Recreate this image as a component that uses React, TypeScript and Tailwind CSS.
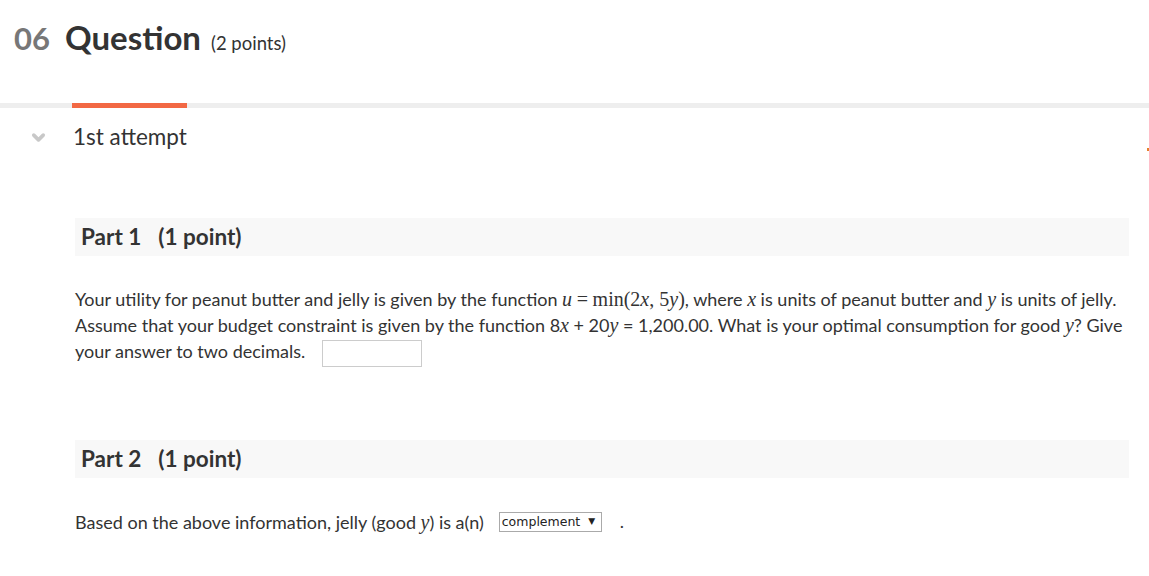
import { ChevronDown } from 'lucide-react';

const math = "font-['Liberation_Serif','DejaVu_Serif',serif] text-[20px]";

function V({ c }: { c: string }) {
  return <i className={math}>{c}</i>;
}

function PartHeader({ n }: { n: number }) {
  return (
    <div className="h-[38px] bg-[#f8f8f8] flex items-center pl-[6px] text-[22.5px] font-bold text-[#333]">
      <span>Part {n}</span>
      <span className="ml-[17px]">(1 point)</span>
    </div>
  );
}

export default function App() {
  return (
    <div className="w-[1149px] h-[576px] bg-white text-[#333] font-['Lato','Open_Sans',sans-serif] overflow-hidden relative">
      <div className="flex items-baseline pt-[13px] pl-[14px] h-[103px]">
        <span className="text-[31px] font-bold text-[#777]">06</span>
        <span className="ml-[15px] text-[33px] font-bold text-[#333]">Question</span>
        <span className="ml-[10px] text-[18.5px] text-[#333]">(2 points)</span>
      </div>
      <div className="h-[5px] bg-[#eeeeee] flex">
        <div className="ml-[72px] w-[115px] h-[5px] bg-[#f26844]" />
      </div>
      <div className="flex items-center h-[58px]">
        <ChevronDown className="ml-[29px] w-[19px] h-[19px] text-[#c8c8c8]" strokeWidth={4.5} />
        <span className="ml-[25px] text-[22.5px] text-[#333]">1st attempt</span>
      </div>

      <div className="ml-[75px] mr-[20px] mt-[52px]">
        <PartHeader n={1} />
        <p className="mt-[30px] text-[18px] leading-[26px] text-[#333] whitespace-nowrap">
          Your utility for peanut butter and jelly is given by the function{' '}
          <V c="u" /> <span className={math}>=</span>{' '}
          <span className={math}>
            min(2<i>x</i>, 5<i>y</i>)
          </span>
          , where <V c="x" /> is units of peanut butter and <V c="y" /> is units of jelly.
          <br />
          Assume that your budget constraint is given by the function 8<V c="x" /> + 20<V c="y" /> = 1,200.00.
          What is your optimal consumption for good <V c="y" />? Give
          <br />
          your answer to two decimals.
          <input
            className="ml-[17px] align-middle w-[100px] h-[27px] border border-[#cccccc] outline-none"
            aria-label="answer"
          />
        </p>

        <div className="mt-[73px]">
          <PartHeader n={2} />
        </div>
        <div className="mt-[29px] flex items-center text-[18px] text-[#333]">
          <span>
            Based on the above information, jelly (good <V c="y" />) is a(n)
          </span>
          <div className="ml-[15px] w-[103px] h-[20px] border border-[#aaaaaa] flex items-center pl-[2px] text-[12.5px] font-['DejaVu_Sans',Verdana,sans-serif] text-[#222]">
            complement
            <span className="ml-[8px] text-[9px]">▼</span>
          </div>
          <span className="ml-[18px]">.</span>
        </div>
      </div>
      <div className="absolute left-[1147px] top-[148px] w-[2px] h-[3px] bg-[#e8802c]" />
    </div>
  );
}
